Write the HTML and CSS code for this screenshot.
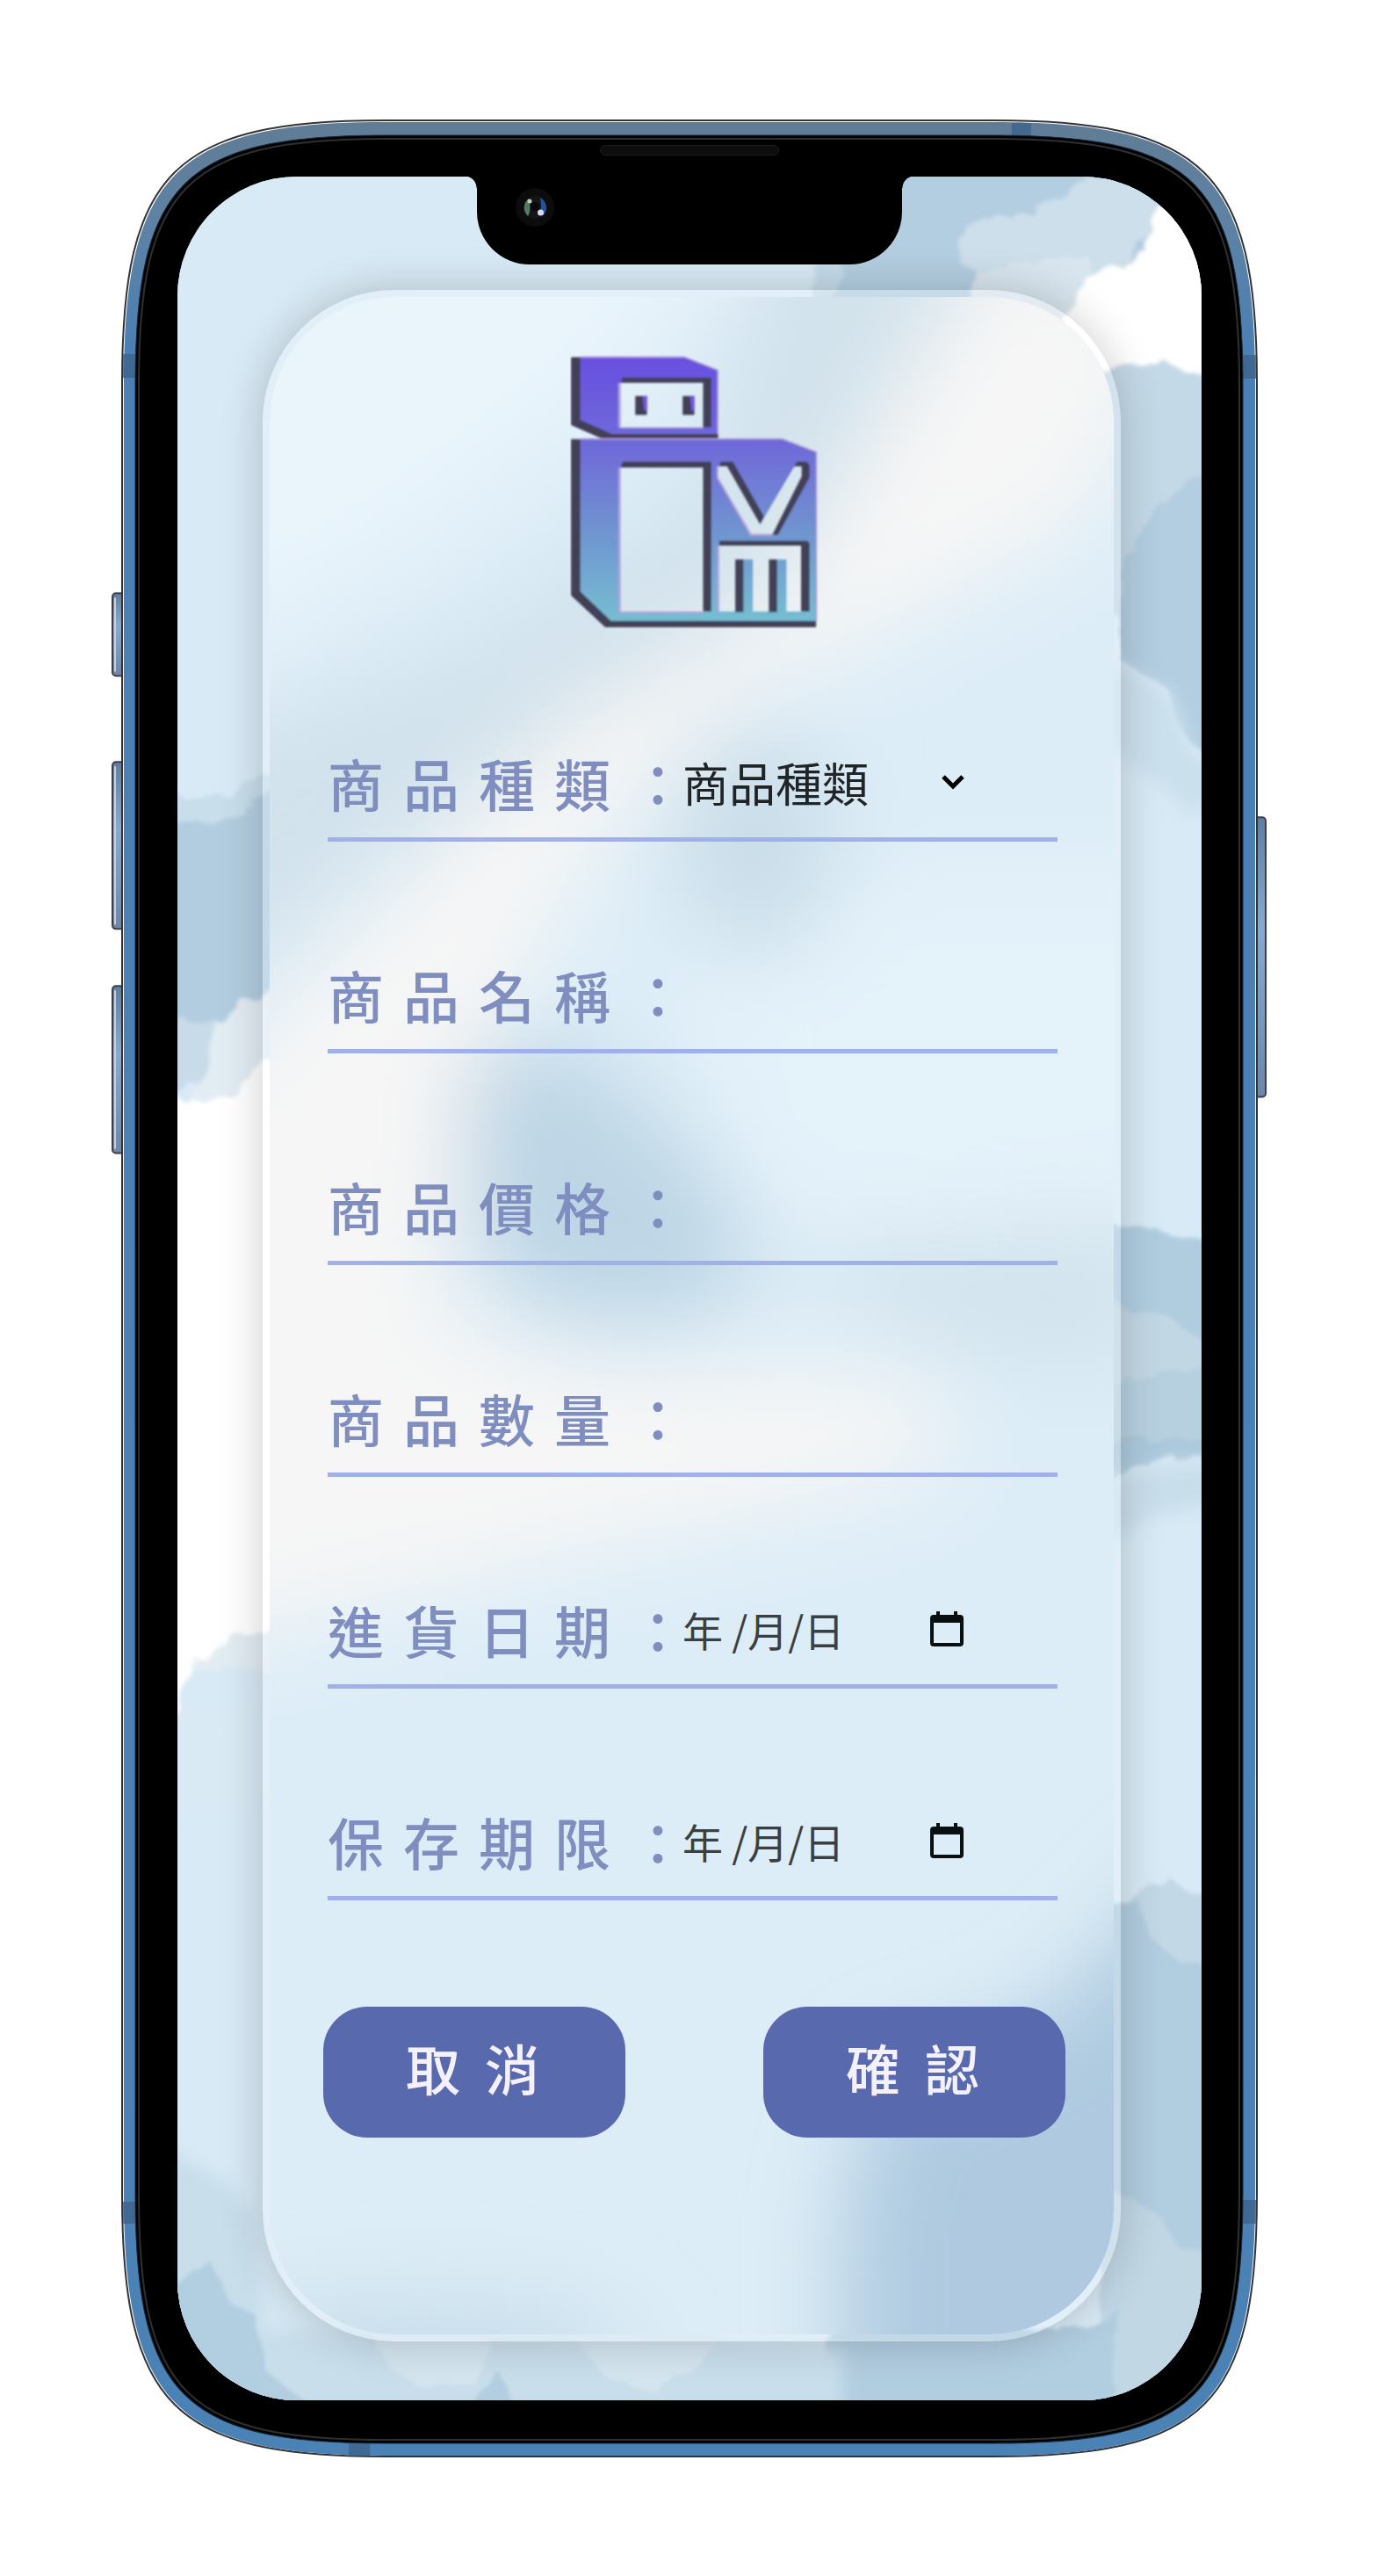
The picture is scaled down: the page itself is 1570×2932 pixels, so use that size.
FILE: index.html
```html
<!DOCTYPE html>
<html lang="zh-Hant">
<head>
<meta charset="utf-8">
<meta name="viewport" content="width=device-width, initial-scale=1">
<title>商品登錄</title>
<link rel="stylesheet" href="styles.css">
</head>
<body>
<main class="phone">
  <svg class="phone-frame" viewBox="139 136 1293 2660" preserveAspectRatio="none" aria-hidden="true">
    <defs>
      <linearGradient id="metal" x1="0" y1="0" x2="0" y2="1">
        <stop offset="0" stop-color="#607c95"/><stop offset=".04" stop-color="#5f82a3"/><stop offset=".1" stop-color="#4a80b3"/><stop offset="1" stop-color="#4b82b5"/>
      </linearGradient>
      <linearGradient id="key" x1="0" y1="0" x2="0" y2="1">
        <stop offset="0" stop-color="#5f7f9f"/><stop offset=".4" stop-color="#86abd0"/><stop offset="1" stop-color="#6b87aa"/>
      </linearGradient>
    </defs>
    <g fill="url(#key)" stroke="#3b3f52" stroke-width="2">
      <rect x="129" y="675" width="16" height="94" rx="4"/>
      <rect x="129" y="867" width="16" height="190" rx="4"/>
      <rect x="129" y="1122" width="16" height="190" rx="4"/>
      <rect x="1426" y="930" width="15" height="318" rx="4"/>
    </g>
    <path d="M132 680V764M132 872V1052M132 1127V1307" stroke="#c9d0dc" stroke-width="2"/>
    <path d="M439 137H1131C1371 137 1431 196 1431 436V2496C1431 2736 1371 2795 1131 2795H439C199 2795 140 2736 140 2496V436C140 196 199 137 439 137Z" fill="#fff" stroke="#333" stroke-width="2"/>
    <path d="M439 139H1131C1370 139 1429 198 1429 436V2496C1429 2735 1370 2794 1131 2794H439C201 2794 142 2735 142 2496V436C142 198 201 139 439 139Z" fill="url(#metal)"/>
    <path d="M1152 140h22v16h-22zM141 403h15v27h-15zM1415 404h15v27h-15zM141 2505h15v25h-15zM1415 2503h15v27h-15zM398 2780h24v14h-24z" fill="#3c6389" opacity=".8"/>
    <path d="M439 154H1131C1362 154 1415 208 1415 438V2496C1415 2726 1362 2780 1131 2780H439C209 2780 155 2726 155 2496V438C155 208 209 154 439 154Z" fill="#000" stroke="#14293c" stroke-width="1"/>
    <path d="M439 158H1131C1359 158 1411 212 1411 438V2496C1411 2723 1359 2776 1131 2776H439C212 2776 159 2723 159 2496V438C159 212 212 158 439 158Z" fill="none" stroke="#2e3032" stroke-width="2"/>
  </svg>

  <div class="screen">
    <svg class="wallpaper" viewBox="202 201 1166 2530" preserveAspectRatio="none" aria-hidden="true">
      <defs>
        <filter id="rough" x="-5%" y="-5%" width="110%" height="110%">
          <feTurbulence type="fractalNoise" baseFrequency=".035" numOctaves="3" seed="4"/>
          <feDisplacementMap in="SourceGraphic" scale="18"/>
          <feGaussianBlur stdDeviation="2"/>
        </filter>
        <filter id="soft" x="-10%" y="-10%" width="120%" height="120%"><feGaussianBlur stdDeviation="10"/></filter>
      </defs>
      <rect x="202" y="201" width="1166" height="2530" fill="#d8eaf6"/>
      <g filter="url(#rough)">
        <path d="M960 180H1400V440H900L930 320Z" fill="#c5dbea"/>
        <path d="M970 180H1400V440H925L955 320Z" fill="#b3cee1"/>
        <path d="M1240 200L1200 225L1175 245L1138 242L1105 252L1088 270L1094 300L1112 308L1115 345L1230 350L1325 250L1300 200Z" fill="#cddfea"/>
        <path d="M1112 310L1150 300L1240 290L1240 370L1100 350Z" fill="#d8e5ee"/>
        <path d="M1400 190L1318 232L1305 285L1275 302L1232 312L1222 345L1205 365L1270 440L1400 440Z" fill="#fff"/>
        <path d="M1250 425L1290 414L1322 410L1350 424L1400 430V700H1240Z" fill="#c4d9e7"/>
        <path d="M1400 520L1330 560L1295 610L1275 660V750L1330 785L1350 840L1400 880Z" fill="#b3cee1"/>
        <path d="M1260 1392L1315 1398L1340 1411H1400V1660H1260Z" fill="#c2d7e4"/>
        <path d="M1260 1392L1315 1398L1340 1411H1400V1550L1330 1498L1290 1494L1260 1475Z" fill="#b0cde0"/>
        <path d="M1260 1576L1320 1562L1400 1558V1656L1330 1650L1260 1680Z" fill="#b7d0e0"/>
        <path d="M1260 1640L1400 1635V1655L1330 1658L1260 1680Z" fill="#acc9dc"/>
        <path d="M1260 2190L1300 2150L1330 2135L1355 2155L1400 2150V2780H1250Z" fill="#c2d8e7"/>
        <path d="M1250 2170L1295 2162L1310 2205L1350 2238L1400 2240V2600L1330 2550L1280 2500L1240 2480Z" fill="#b1cde0"/>
        <path d="M950 2640L1250 2650L1300 2600V2780H920Z" fill="#b1cde0"/>
        <path d="M1285 2500L1320 2520L1345 2560L1400 2565V2780H1260L1270 2650Z" fill="#c1d7e4"/>
        <path d="M180 908L260 905L290 885L330 868V1190L202 1190Z" fill="#c8deeb"/>
        <path d="M180 940L260 930L300 905L330 880V1150L180 1180Z" fill="#b2cde0"/>
        <path d="M180 1162H250L245 1225L180 1250Z" fill="#c8dbe8"/>
        <path d="M248 1168L275 1140L330 1110V1900H180V1245L215 1255L235 1220Z" fill="#e2ecf3"/>
        <path d="M180 1242L215 1254L270 1244L290 1215L330 1195V1850L260 1865L225 1890L202 1950H180Z" fill="#fff"/>
      </g>
      <g filter="url(#soft)">
        <path d="M1262 750L1335 790L1355 850L1400 890L1360 930L1310 886L1262 850Z" fill="#cbe0ed"/>
        <path d="M1260 1685L1320 1668L1400 1660V1712L1310 1725L1260 1760Z" fill="#c9deeb"/>
        <path d="M190 1970L215 1935L250 1945L320 1935V2060H190Z" fill="#d9eaf5"/>
        <path d="M180 2440L255 2480L290 2520L300 2650L660 2660L960 2670V2780H180Z" fill="#c8deeb"/>
      </g>
      <g filter="url(#rough)">
        <path d="M180 2610L242 2575L262 2620L292 2635L305 2700L370 2750H180ZM530 2750L570 2700L590 2750Z" fill="#b2cee1"/>
        <path d="M420 2650H560L540 2710L490 2718L450 2700ZM650 2655H820L790 2700L740 2720L690 2705Z" fill="#d4e5f0"/>
      </g>
    </svg>

    <div class="notch">
      <svg class="camera" viewBox="0 0 44 44" aria-hidden="true">
        <circle cx="22" cy="22" r="22" fill="#0c0c0d"/>
        <circle cx="22" cy="22" r="13" fill="#171417"/>
        <path d="M15 12a13 13 0 0 0-1 20c3-4 3-12 1-20z" fill="#527a67"/>
        <path d="M28 11a13 13 0 0 1 4 20l-5-2c3-5 2-12 1-18z" fill="#215396"/>
        <circle cx="16" cy="15" r="2.500" fill="#b8cfc4"/><circle cx="28.500" cy="28" r="3.500" fill="#d9d8ee"/>
        <circle cx="22" cy="21" r="5" fill="#090709"/>
      </svg>
    </div>
    <div class="speaker"></div>

    <section class="card">
      <svg class="card-glass" viewBox="307 338 961 2318" preserveAspectRatio="none" aria-hidden="true">
        <defs><filter id="haze" x="-30%" y="-30%" width="160%" height="160%"><feGaussianBlur stdDeviation="50"/></filter></defs>
        <rect x="307" y="338" width="961" height="2318" fill="#ddedf7"/>
        <g filter="url(#haze)">
          <path d="M200 200H900L700 450L480 620L200 780Z" fill="#e9f4fb"/>
          <path d="M760 1000H1400V1400H850Z" fill="#e4f2fa"/>
          <path d="M880 250H1130L1030 540L800 740L400 1000L200 1160V860L520 740L800 560Z" fill="#d2e2ec"/>
          <path d="M1150 230L1350 380L1230 600L1000 720L840 800L680 960L560 1180L500 1500L700 1560L950 1560L1080 1580L1060 1680L700 1760L200 1880V1260L420 1040L620 840L880 680Z" fill="#f6f6f6"/>
          <ellipse cx="860" cy="960" rx="90" ry="130" fill="#c9dde9"/>
          <path d="M530 1210L640 1180L800 1320L870 1420L800 1500L620 1500L530 1400Z" fill="#bdd5e5"/>
          <path d="M900 1430L1300 1380V1560L1050 1530Z" fill="#d2e3ed"/>
          <path d="M1360 2120L1400 2120V2800H960L960 2520L1000 2360L1180 2300Z" fill="#afcae0"/>
          <ellipse cx="480" cy="2680" rx="240" ry="60" fill="#c6dcea"/>
        </g>
      </svg>

      <svg class="logo" viewBox="145 100 850 940" role="img" aria-label="VM">
        <defs>
          <linearGradient id="brand" gradientUnits="userSpaceOnUse" x1="0" y1="110" x2="0" y2="1012">
            <stop offset="0" stop-color="#6a4fe0"/><stop offset=".38" stop-color="#6f6fd8"/><stop offset=".65" stop-color="#6f93d0"/><stop offset="1" stop-color="#76bdd2"/>
          </linearGradient>
          <filter id="smooth"><feGaussianBlur stdDeviation="3"/></filter>
          <mask id="cut">
            <rect x="145" y="100" width="850" height="940" fill="#fff"/>
            <path d="M318 198H600V350H318ZM318 488H600V980H318Z" fill="#000"/>
            <path d="M652 484L682 484L795 682L912 484H937V518L838 715H765L652 522Z" fill="#000"/>
            <path d="M655 755H935V980H885V802H825V980H770V802H710V980H655Z" fill="#000"/>
          </mask>
        </defs>
        <g filter="url(#smooth)">
          <g mask="url(#cut)">
            <path d="M150 112H535L650 157V388H255L150 342ZM150 392H870L985 437V1032H265L150 925Z" fill="#424057" stroke="#424057" stroke-width="3" stroke-linejoin="round"/>
            <path d="M180 112H535L650 157V373H288L180 325ZM180 392H870L985 437V1012H285L180 912Z" fill="url(#brand)"/>
            <path d="M180 110H535L650 155V373M180 390H870L987 435V1012" fill="none" stroke="#b3a0dc" stroke-width="5"/>
            <path d="M314 350V198M314 350H600M314 980V488M314 982H600M650 522V484M650 522L763 718H838M652 980V755" fill="none" stroke="#b3a0dc" stroke-width="8"/>
            <path d="M325 180H628V350H598V198H318ZM325 468H628V980H598V488H318ZM655 484L660 468H702L808 655L795 684L680 484ZM908 486L922 468H955L964 480V522L856 718H836L936 516V486ZM655 738H955L964 746V980H933V755H655Z" fill="#424057"/>
            <path d="M708 800H738V982H708ZM823 800H853V982H823Z" fill="#424057"/>
          </g>
          <path d="M368 243H408V308H368ZM530 243H570V308H530Z" fill="#424057"/>
          <path d="M393 243H408V290L399 296ZM555 243H570V290L561 296Z" fill="#7258df"/>
        </g>
      </svg>

      <form class="form">
        <div class="row">
          <label for="kind">商品種類：</label>
          <div class="field">
            <select id="kind"><option>商品種類</option></select>
            <svg class="chevron" viewBox="0 0 28 18" aria-hidden="true"><path d="M3 3L14 14L25 3" fill="none" stroke="#000" stroke-width="5"/></svg>
          </div>
        </div>
        <div class="row"><label for="name">商品名稱：</label><input class="text" id="name" type="text"></div>
        <div class="row"><label for="price">商品價格：</label><input class="text" id="price" type="text"></div>
        <div class="row"><label for="amount">商品數量：</label><input class="text" id="amount" type="text"></div>
        <div class="row">
          <label for="stocked">進貨日期：</label>
          <div class="field">
            <input class="text date" id="stocked" type="text" placeholder="年 /月/日">
            <button class="picker" type="button" aria-label="選擇進貨日期"><svg viewBox="0 0 38 40" aria-hidden="true"><path d="M4 4H7V0H11V4H27V0H31V4H34Q38 4 38 8V36Q38 40 34 40H4Q0 40 0 36V8Q0 4 4 4ZM4 13V36H34V13Z" fill="#0b0f0f" fill-rule="evenodd"/></svg></button>
          </div>
        </div>
        <div class="row">
          <label for="expiry">保存期限：</label>
          <div class="field">
            <input class="text date" id="expiry" type="text" placeholder="年 /月/日">
            <button class="picker" type="button" aria-label="選擇保存期限"><svg viewBox="0 0 38 40" aria-hidden="true"><path d="M4 4H7V0H11V4H27V0H31V4H34Q38 4 38 8V36Q38 40 34 40H4Q0 40 0 36V8Q0 4 4 4ZM4 13V36H34V13Z" fill="#0b0f0f" fill-rule="evenodd"/></svg></button>
          </div>
        </div>
        <div class="actions">
          <button class="action" type="reset">取消</button>
          <button class="action" type="submit">確認</button>
        </div>
      </form>
    </section>
  </div>
</main>
</body>
</html>
```
FILE: styles.css
```css
* {
  box-sizing: border-box;
}

body {
  margin: 0;
  padding: 136px 138px;
  background: #fff;
  font-family: "Noto Sans CJK TC", "Noto Sans", sans-serif;
}

button,
input,
select {
  margin: 0;
  padding: 0;
  border: 0;
  background: none;
  color: inherit;
  font-family: inherit;
}

.phone {
  position: relative;
  padding: 65px 64px;
}

.phone-frame {
  position: absolute;
  inset: 0;
  width: 100%;
  height: 100%;
  overflow: visible;
}

.screen {
  position: relative;
  padding: 129px 92px 67px 97px;
  border-radius: 136px;
  background: #d8eaf6;
}

.wallpaper {
  position: absolute;
  inset: 0;
  width: 100%;
  height: 100%;
  border-radius: 136px;
}

.notch {
  position: absolute;
  top: -1px;
  left: 50%;
  width: 484px;
  height: 101px;
  margin-left: -242px;
  border-radius: 0 0 60px 60px;
  background: #000;
}

.notch::before,
.notch::after {
  content: "";
  position: absolute;
  top: 0;
  width: 14px;
  height: 14px;
}

.notch::before {
  right: 100%;
  background: radial-gradient(circle at 0 100%, transparent 13px, #000 14px);
}

.notch::after {
  left: 100%;
  background: radial-gradient(circle at 100% 100%, transparent 13px, #000 14px);
}

.camera {
  position: absolute;
  top: 14px;
  left: 44px;
  width: 44px;
  height: 44px;
}

.speaker {
  position: absolute;
  top: -36px;
  left: 50%;
  width: 204px;
  height: 12px;
  margin-left: -102px;
  border: 1px solid #1d1d1d;
  border-radius: 6px;
  background: #0d0d0d;
}

.card {
  position: relative;
  display: flex;
  flex-direction: column;
  align-items: center;
  padding: 65px 55px 224px 61px;
  border: 8px solid rgba(255, 255, 255, 0.25);
  border-radius: 150px;
  box-shadow: 0 0 50px rgba(0, 0, 0, 0.2);
}

.card-glass {
  position: absolute;
  inset: 0;
  width: 100%;
  height: 100%;
  border-radius: 142px;
}

.logo {
  position: relative;
  width: 283px;
  height: 313px;
}

.form {
  position: relative;
  display: grid;
  grid-template-columns: minmax(0, 1fr);
  gap: 121px;
  width: 100%;
  margin-top: 122px;
}

.row {
  display: flex;
  align-items: center;
  height: 120px;
  margin: 0 9px 0 5px;
  padding-bottom: 12px;
  border-bottom: 5px solid #a0b0ea;
}

.row label {
  flex: none;
  margin-right: -26px;
  color: #7f8ebf;
  font-size: 64px;
  font-weight: 500;
  line-height: 96px;
  letter-spacing: 22px;
  white-space: nowrap;
}

.field {
  position: relative;
  display: flex;
  align-items: center;
  width: 324px;
}

select {
  width: 100%;
  appearance: none;
  color: #202426;
  font-size: 53px;
  line-height: 80px;
}

.chevron {
  position: absolute;
  right: 2px;
  width: 28px;
  height: 18px;
  pointer-events: none;
}

.text {
  flex: 1;
  width: 100%;
  min-width: 0;
  height: 80px;
  color: #202426;
  font-size: 53px;
  outline: 0;
}

.date {
  font-size: 46px;
}

.date::placeholder {
  color: #3a4042;
  opacity: 1;
}

.picker {
  display: flex;
  margin-right: 4px;
}

.picker svg {
  width: 38px;
  height: 40px;
}

.actions {
  display: flex;
  justify-content: space-between;
}

.action {
  width: 344px;
  height: 149px;
  padding: 0 0 12px 24px;
  border-radius: 50px;
  background: #5969ae;
  color: #f4f1fa;
  font-size: 62px;
  font-weight: 500;
  letter-spacing: 28px;
}
```
